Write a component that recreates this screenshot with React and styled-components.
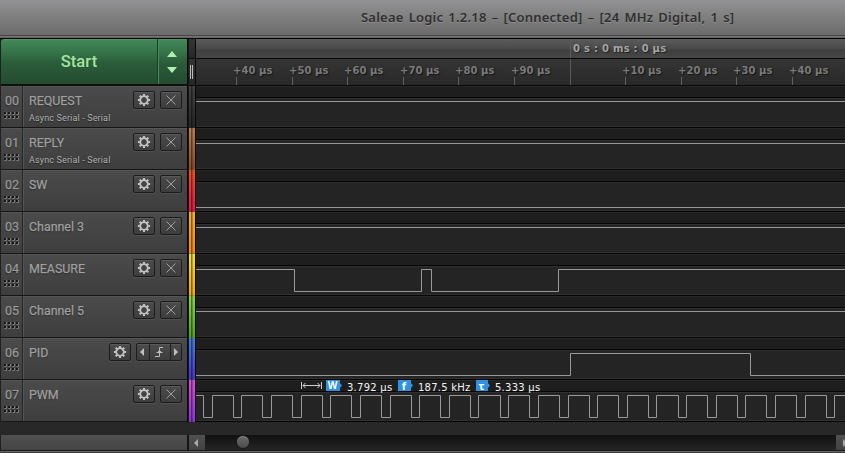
import React from 'react';
import styled, { createGlobalStyle } from 'styled-components';

const GlobalStyle = createGlobalStyle`
  * { box-sizing: border-box; }
  body { margin: 0; background: #282828; overflow: hidden; }
`;

const Window = styled.div`
  width: 845px;
  height: 453px;
  overflow: hidden;
  display: flex;
  flex-direction: column;
  background: #282828;
  font-family: Roboto, sans-serif;
`;

const TitleBar = styled.header`
  height: 39px;
  flex: none;
  padding: 8px 0 0 361px;
  font: 600 13px/18px 'Noto Sans', sans-serif;
  letter-spacing: 0.22px;
  word-spacing: 1.5px;
  white-space: nowrap;
  color: #303030;
  text-shadow: 0 1px 0 rgba(255, 255, 255, 0.18);
  background:
    linear-gradient(#444 0 1px, #767676 1px 2px, #626262 2px 3px, #050505 3px 4px) 0 35px / 100% 4px no-repeat,
    linear-gradient(#929294, #6b6b6b 35px);
`;

const Workspace = styled.main`
  display: grid;
  grid-template-columns: 188px 8px 649px;
  height: 383px;
  flex: none;
`;

const Sidebar = styled.aside`
  border-left: 1px solid #202020;
  border-right: 1px solid #080808;
`;

const StartBar = styled.div`
  height: 47px;
  display: grid;
  grid-template-columns: 156px 1fr;
  border-bottom: 2px solid #101010;
  background: linear-gradient(#43895a 0, #387a4d 10px, #2b5d3a 24px, #234b30 45px);
  box-shadow: inset 0 1px 0 #4b9162;
  border-top-left-radius: 4px;
`;

const StartButton = styled.button`
  border: 0;
  padding: 0;
  background: none;
  color: #a5e3a0;
  font: 500 16.5px/45px Roboto, sans-serif;
  letter-spacing: 0.1px;
`;

const Stepper = styled.div`
  border-left: 1px solid #173d22;
  box-shadow: inset 1px 0 0 #4a8c5e;
  svg { display: block; }
`;

const Row = styled.div`
  height: 42px;
  display: grid;
  grid-template-columns: 21px 1fr;
  border-bottom: 1px solid #161616;
  background: linear-gradient(#4b4b4b, #3e3e3e);
  box-shadow: inset 0 1px 0 #555;
`;

const Index = styled.div`
  padding: 7px 0 0 4px;
  color: #9a9a9a;
  font: 12.5px/15px Roboto, sans-serif;
  letter-spacing: -0.1px;
  text-shadow: 0 1px 1px #222;
  -webkit-text-stroke: 0.25px #9a9a9a;
  svg { display: block; margin-top: 3px; margin-left: -1px; }
`;

const Details = styled.div`
  border-left: 1px solid #252525;
  box-shadow: inset 1px 1px 0 #555;
  padding: 5px 5px 0 6px;
`;

const Head = styled.div`
  display: flex;
  align-items: center;
  height: 18px;
`;

const Name = styled.span`
  flex: 1;
  color: #a0a0a0;
  font: 12.4px/18px Roboto, sans-serif;
  padding-top: 2px;
  text-shadow: 0 1px 1px #222;
  -webkit-text-stroke: 0.25px #a0a0a0;
  white-space: nowrap;
`;

const Analyzer = styled.div`
  color: #b0b0b0;
  font: 9px/12px Roboto, sans-serif;
  letter-spacing: 0.14px;
  margin-top: 3px;
  text-shadow: 0 1px 1px #222;
`;

const ToolButton = styled.button`
  width: 22px;
  height: 18px;
  padding: 0;
  margin-left: 5px;
  border: 1px solid #1c1c1c;
  border-radius: 2px;
  background: linear-gradient(#4b4b4b, #3d3d3d);
  box-shadow: inset 0 1px 0 #5a5a5a, 0 1px 0 #505050;
  svg { display: block; }
`;

const TriggerGroup = styled.div`
  display: grid;
  grid-template-columns: 12px 21px 11px;
  width: 46px;
  height: 18px;
  margin-left: 5px;
  border: 1px solid #1c1c1c;
  border-radius: 2px;
  background: linear-gradient(#4b4b4b, #3d3d3d);
  box-shadow: inset 0 1px 0 #5a5a5a, 0 1px 0 #505050;
`;

const TriggerCell = styled.button`
  border: 0;
  padding: 0;
  background: none;
  border-left: ${(p) => (p.$first ? '0' : '1px solid #202020')};
  svg { display: block; }
`;

const Gutter = styled.div`
  display: flex;
  flex-direction: column;
  border-left: 1px solid #151515;
  border-right: 1px solid #080808;
`;

const Grip = styled.div`
  height: ${(p) => p.$h}px;
  background: linear-gradient(#353535, #262626);
  border-bottom: 1px solid #0b0b0b;
  svg { display: block; }
`;

const ColorTab = styled.div`
  height: 42px;
  border-bottom: 1px solid rgba(0, 0, 0, 0.3);
  background:
    linear-gradient(90deg, transparent 2px, rgba(0, 0, 0, 0.45) 2px 3px, rgba(0, 0, 0, 0.25) 3px 4px, transparent 4px),
    linear-gradient(${(p) => p.$from}, ${(p) => p.$to});
`;

const Timeline = styled.section`
  min-width: 0;
  overflow: hidden;
  font-family: 'DejaVu Sans', sans-serif;
`;

const MajorRuler = styled.div`
  height: 20px;
  display: grid;
  grid-template-columns: 374px 1fr;
  background: linear-gradient(#5b5b5b, #494949 10px, #404040 11px, #464646 19px);
  border-bottom: 1px solid #080808;
`;

const MajorLabel = styled.div`
  grid-column: 2;
  padding: 1px 0 0 2px;
  color: #a4a4a4;
  font: bold 10px/17px 'DejaVu Sans', sans-serif;
  letter-spacing: 0.27px;
  text-shadow: 1px 1px 1px #222;
  border-left: 1px solid #5c5c5c;
`;

const MinorRuler = styled.div`
  height: 27px;
  display: grid;
  grid-template-columns: 37px 56px 55px 56px 55px 56px 59px 52px 56px 55px 56px 56px;
  background: linear-gradient(#353535, #282828);
  border-bottom: 1px solid #080808;
`;

const TickCell = styled.div`
  border-left: ${(p) => (p.$origin ? '1px solid #5a5a5a' : '0')};
  color: #7a7a7a;
  font: bold 10px/16px 'DejaVu Sans', sans-serif;
  letter-spacing: 0.08px;
  padding-top: 4px;
  white-space: nowrap;
  text-shadow: 1px 1px 1px #151515;
  &::after {
    content: '';
    display: ${(p) => (p.$label ? 'block' : 'none')};
    width: 1px;
    height: 8px;
    margin: -2px 0 0 3px;
    background: #606060;
  }
`;

const Lane = styled.div`
  position: relative;
  height: 42px;
  border-bottom: 1px solid #050505;
  background: linear-gradient(#282828 0 1px, #1e1e1e 1px 11px, #050505 11px 12px, #303030 12px 13px, #242424 13px 40px, #303030 40px 41px);
  & > svg { display: block; }
`;

const Measurement = styled.div`
  position: absolute;
  left: 105px;
  top: -1px;
  display: flex;
  height: 14px;
  svg { flex: none; }
`;

const Value = styled.span`
  color: #f4f4f4;
  font: 10px/14px 'DejaVu Sans', sans-serif;
  letter-spacing: 0.25px;
  width: ${(p) => p.$w}px;
  padding-left: 5px;
  padding-top: 2px;
  white-space: nowrap;
`;

const Flag = styled.span`
  width: ${(p) => p.$w}px;
  height: 11px;
  margin-top: 1px;
  padding-right: 3px;
  background: #2f91e2;
  clip-path: polygon(0 0, calc(100% - 2px) 0, calc(100% - 2px) 3px, 100% 5.5px, calc(100% - 2px) 8px, calc(100% - 2px) 11px, 0 11px);
  color: #fff;
  text-align: center;
  font: bold ${(p) => p.$size || 10}px/11px 'Noto Sans', sans-serif;
`;

const Footer = styled.footer`
  height: 31px;
  display: grid;
  grid-template-columns: 187px 2px 16px 631px 1fr;
  padding-top: 13px;
  background: linear-gradient(#181818 0 1px, #686868 1px 2px, #3c3c3c 2px 3px) 0 28px / 100% 3px no-repeat, #282828;
`;

const FooterPanel = styled.div`
  height: 15px;
  background: linear-gradient(#505050, #444);
  border-left: 1px solid #202020;
`;

const FooterGap = styled.div`
  height: 15px;
  background: #151515;
`;

const ScrollArrow = styled.button`
  height: 15px;
  border: 0;
  padding: 0;
  background: linear-gradient(#505050, #424242);
  overflow: hidden;
  svg { display: block; }
`;

const ScrollTrack = styled.div`
  height: 15px;
  padding-left: 31px;
  background: linear-gradient(#101010, #252525);
`;

const Thumb = styled.div`
  width: 14px;
  height: 14px;
  border-radius: 50%;
  border: 1px solid #191919;
  background: linear-gradient(#6a6a6a, #4b4b4b);
  box-shadow: inset 0 1px 0 #888;
`;

const GearIcon = () => (
  <svg width="20" height="16" viewBox="-10 -8 20 16" fill="none" stroke="#c4c4c4">
    <circle r="3.8" strokeWidth="1.8" />
    {[0, 45, 90, 135, 180, 225, 270, 315].map((a) => (
      <path key={a} d="M0-4.2V-6.1" strokeWidth="2" transform={`rotate(${a})`} />
    ))}
  </svg>
);

const CloseIcon = () => (
  <svg width="20" height="16" fill="none" stroke="#a0a0a0">
    <path d="M5.5 3.5l9 9m0-9l-9 9" />
  </svg>
);

const DragDots = () => (
  <svg width="17" height="9">
    {[0, 4].map((y) =>
      [0, 4, 8, 12].map((x) => (
        <g key={`${x}-${y}`}>
          <rect x={x} y={y + 1} width="2" height="2" fill="#171717" />
          <path d={`M${x + 2.5} ${y + 1}v2.5h-2`} stroke="#7d7d7d" fill="none" />
        </g>
      ))
    )}
  </svg>
);

const TriggerControl = () => (
  <TriggerGroup>
    <TriggerCell $first>
      <svg width="11" height="16"><path d="M7 4v8L3 8z" fill="#c0c0c0" /></svg>
    </TriggerCell>
    <TriggerCell>
      <svg width="20" height="16" fill="none" stroke="#bcbcbc">
        <path d="M5 12.5h4.5v-9H13M7 9l2.5-2.5L12 9M6.5 8.5h6" />
      </svg>
    </TriggerCell>
    <TriggerCell>
      <svg width="10" height="16"><path d="M3 4v8l4-4z" fill="#c0c0c0" /></svg>
    </TriggerCell>
  </TriggerGroup>
);

const PWM_EDGES = [
  203, 212, 233, 241, 262, 271, 292, 301, 322, 330, 351, 360, 381, 390, 411, 419, 440, 449, 470, 478, 500, 508,
  529, 538, 559, 568, 589, 597, 618, 627, 648, 656, 678, 686, 707, 716, 737, 745, 766, 775, 796, 805, 826, 834,
];

const CHANNELS = [
  { name: 'REQUEST', analyzer: 'Async Serial - Serial', colors: ['#424242', '#262626'], high: true, edges: [] },
  { name: 'REPLY', analyzer: 'Async Serial - Serial', colors: ['#b97d50', '#8a4f20'], high: true, edges: [] },
  { name: 'SW', colors: ['#f1501c', '#e4134b'], high: false, edges: [] },
  { name: 'Channel 3', colors: ['#f6ae35', '#f78a00'], high: true, edges: [] },
  { name: 'MEASURE', colors: ['#f4e02f', '#f2a900'], high: true, edges: [294, 421, 431, 558] },
  { name: 'Channel 5', colors: ['#8ed23f', '#50a31f'], high: true, edges: [] },
  { name: 'PID', colors: ['#3b82dc', '#5030cc'], high: false, edges: [570, 750], trigger: true },
  { name: 'PWM', colors: ['#d84cd0', '#8b35e0'], high: true, edges: PWM_EDGES, measured: true },
];

const TICKS = ['', '+40 µs', '+50 µs', '+60 µs', '+70 µs', '+80 µs', '+90 µs', '', '+10 µs', '+20 µs', '+30 µs', '+40 µs'];

function tracePath(high, edges) {
  let level = high;
  let d = `M0 ${level ? 15.5 : 37.5}`;
  edges.forEach((x) => {
    level = !level;
    d += `H${x - 195.5}V${level ? 15.5 : 37.5}`;
  });
  return `${d}H649`;
}

const Trace = ({ high, edges }) => (
  <svg width="649" height="41">
    <path d={tracePath(high, edges)} fill="none" stroke="#999" />
  </svg>
);

const PulseMeasurement = () => (
  <Measurement>
    <svg width="25" height="13" fill="none" stroke="#d0d0d0">
      <path d="M.5 3v7M20.5 3v7M2 6.5h17M4.5 4L2 6.5 4.5 9M16.5 4L19 6.5 16.5 9" />
    </svg>
    <Flag $w={16}>W</Flag>
    <Value $w={56}>3.792 µs</Value>
    <Flag $w={15} $size={11}>f</Flag>
    <Value $w={63}>187.5 kHz</Value>
    <Flag $w={14} $size={11}>τ</Flag>
    <Value $w={60}>5.333 µs</Value>
  </Measurement>
);

const ChannelRow = ({ channel, index }) => (
  <Row>
    <Index>
      {`0${index}`}
      <DragDots />
    </Index>
    <Details>
      <Head>
        <Name>{channel.name}</Name>
        <ToolButton aria-label="Settings"><GearIcon /></ToolButton>
        {channel.trigger ? <TriggerControl /> : <ToolButton aria-label="Hide"><CloseIcon /></ToolButton>}
      </Head>
      {channel.analyzer && <Analyzer>{channel.analyzer}</Analyzer>}
    </Details>
  </Row>
);

export default function App() {
  return (
    <Window>
      <GlobalStyle />
      <TitleBar>Saleae Logic 1.2.18 – [Connected] – [24 MHz Digital, 1 s]</TitleBar>
      <Workspace>
        <Sidebar>
          <StartBar>
            <StartButton>Start</StartButton>
            <Stepper>
              <svg width="29" height="45" fill="#b4edb0">
                <path d="M9 18l5-6 5 6zM9 28l5 6 5-6z" />
              </svg>
            </Stepper>
          </StartBar>
          {CHANNELS.map((c, i) => <ChannelRow key={c.name} channel={c} index={i} />)}
        </Sidebar>
        <Gutter>
          <Grip $h={20} />
          <Grip $h={27}>
            <svg width="6" height="26">
              <path d="M1.5 6v14M3.5 6v14" stroke="#bbb" />
            </svg>
          </Grip>
          {CHANNELS.map((c) => <ColorTab key={c.name} $from={c.colors[0]} $to={c.colors[1]} />)}
        </Gutter>
        <Timeline>
          <MajorRuler><MajorLabel>0 s : 0 ms : 0 µs</MajorLabel></MajorRuler>
          <MinorRuler>
            {TICKS.map((t, i) => <TickCell key={i} $label={t !== ''} $origin={i === 7}>{t}</TickCell>)}
          </MinorRuler>
          {CHANNELS.map((c) => (
            <Lane key={c.name}>
              <Trace high={c.high} edges={c.edges} />
              {c.measured && <PulseMeasurement />}
            </Lane>
          ))}
        </Timeline>
      </Workspace>
      <Footer>
        <FooterPanel />
        <FooterGap />
        <ScrollArrow aria-label="Scroll left">
          <svg width="16" height="15"><path d="M9 4v8L5 8z" fill="#aaa" /></svg>
        </ScrollArrow>
        <ScrollTrack><Thumb /></ScrollTrack>
        <ScrollArrow aria-label="Scroll right">
          <svg width="16" height="15"><path d="M7 4v8l4-4z" fill="#aaa" /></svg>
        </ScrollArrow>
      </Footer>
    </Window>
  );
}
